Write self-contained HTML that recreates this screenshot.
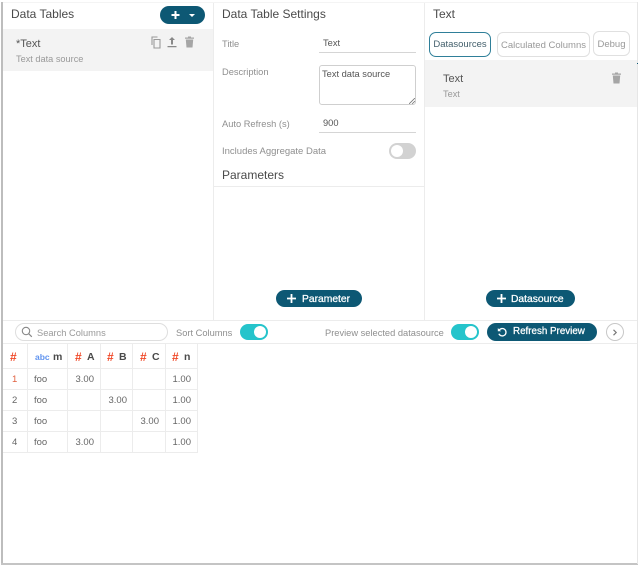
<!DOCTYPE html>
<html>
<head>
<meta charset="utf-8">
<style>
html,body{margin:0;padding:0;background:#fff}
#p{position:relative;width:640px;height:567px;overflow:hidden;background:#fff;font-family:"Liberation Sans",sans-serif;color:#555;filter:blur(.3px)}
#p div,#p svg{position:absolute}
.t{white-space:nowrap;line-height:14px}
.h{font-size:12px;color:#4a4a4a;line-height:16px;white-space:nowrap}
.l{font-size:9.300px;color:#8f8f8f;white-space:nowrap;line-height:12px}
.v{font-size:9.300px;color:#555;white-space:nowrap;line-height:12px}
.ln{background:#ececec}
.u{background:#d5d5d5;height:1px}
.btn{background:#0d5874;border-radius:10px;color:#fff;font-size:10.300px;-webkit-text-stroke:.25px #fff;line-height:17px;height:17px;white-space:nowrap}
.tab{border:1px solid #e0e0e0;border-radius:6px;box-sizing:border-box;font-size:9.500px;color:#999;text-align:center;background:#fff;white-space:nowrap}
.sw{background:#25c4cb;border-radius:8px;width:28px;height:16px}
.sw i{position:absolute;display:block;width:12px;height:12px;border-radius:50%;background:#fff;left:14px;top:2px}
.c{font-size:9.500px;color:#666;white-space:nowrap;line-height:12px}
.r{text-align:right}
.hash{font-size:12px;font-weight:bold;color:#f04a2a;line-height:14px}
.hd{font-size:10.500px;font-weight:bold;color:#4a4a4a;line-height:14px}
</style>
</head>
<body>
<div id="p">
<!-- frame -->
<div style="left:1px;top:2px;width:2px;height:562px;background:#bdbdbd"></div>
<div style="left:1px;top:563px;width:637px;height:2px;background:#c4c4c4"></div>
<div style="left:637px;top:2px;width:1px;height:562px;background:#e6e6e6"></div>
<div style="left:3px;top:2px;width:634px;height:1px;background:#f4f4f4"></div>
<!-- panel lines -->
<div class="ln" style="left:213px;top:3px;width:1px;height:317px"></div>
<div class="ln" style="left:424px;top:3px;width:1px;height:317px"></div>
<div class="ln" style="left:3px;top:320px;width:634px;height:1px"></div>
<div class="ln" style="left:3px;top:343px;width:634px;height:1px"></div>
<div class="ln" style="left:214px;top:186px;width:210px;height:1px"></div>

<!-- Data Tables -->
<div class="h" style="left:11px;top:6px">Data Tables</div>
<div style="left:160px;top:6px;width:45px;height:18px;background:#0d5874;border-radius:9px"></div>
<svg style="left:169px;top:9px" width="28" height="12" viewBox="0 0 28 12"><path d="M6.500 2v8M2.500 6h8" stroke="#fff" stroke-width="2"/><path d="M20 5h6l-3 3z" fill="#fff"/></svg>
<div style="left:3px;top:29px;width:210px;height:42px;background:#f3f3f3"></div>
<div class="t" style="left:16px;top:37px;font-size:11px;color:#555">*Text</div>
<div class="t" style="left:16px;top:52px;font-size:9.200px;color:#999">Text data source</div>
<svg style="left:150px;top:36px" width="12" height="13" viewBox="0 0 12 13"><path d="M7.500 1H2v8M4 3.500h6v8.500H4z" fill="none" stroke="#999" stroke-width="1.100"/></svg>
<svg style="left:166px;top:36px" width="12" height="12" viewBox="0 0 12 12"><path d="M6 1l3 3H7v4.500H5V4H3zM1.500 10h9v1.300h-9z" fill="#888"/></svg>
<svg style="left:184px;top:36px" width="11" height="12" viewBox="0 0 11 12"><path d="M4 0.500h3V1.500h3v1.300H1V1.500h3zM1.800 3.500h7.400L8.500 11.500h-6z" fill="#a5a5a5"/></svg>

<!-- Settings -->
<div class="h" style="left:222px;top:6px">Data Table Settings</div>
<div class="l" style="left:222px;top:38px">Title</div>
<div class="v" style="left:323px;top:37px">Text</div>
<div class="u" style="left:319px;top:52px;width:97px"></div>
<div class="l" style="left:222px;top:66px">Description</div>
<div style="left:319px;top:65px;width:97px;height:40px;box-sizing:border-box;border:1px solid #cfcfcf;border-radius:3px"></div>
<div class="v" style="left:322px;top:68px">Text data source</div>
<svg style="left:409px;top:98px" width="6" height="6" viewBox="0 0 6 6"><path d="M0 6L6 0M3 6L6 3" stroke="#777" stroke-width=".8"/></svg>
<div class="l" style="left:222px;top:118px">Auto Refresh (s)</div>
<div class="v" style="left:323px;top:117px">900</div>
<div class="u" style="left:319px;top:132px;width:97px"></div>
<div class="l" style="left:222px;top:146px;font-size:9.500px">Includes Aggregate Data</div>
<div style="left:389px;top:143px;width:27px;height:16px;border-radius:8px;background:#d2d2d2"><i style="position:absolute;display:block;width:12px;height:12px;border-radius:50%;background:#fff;left:2px;top:2px"></i></div>
<div class="h" style="left:222px;top:167px">Parameters</div>
<div class="btn" style="left:276px;top:290px;width:86px"></div>
<svg style="left:286px;top:293px" width="11" height="11" viewBox="0 0 11 11"><path d="M5.500 1v9M1 5.500h9" stroke="#fff" stroke-width="1.800"/></svg>
<div class="btn" style="left:302px;top:291px;background:none">Parameter</div>

<!-- Text panel -->
<div class="h" style="left:433px;top:6px">Text</div>
<div class="tab" style="left:429px;top:32px;width:62px;height:25px;border:1.500px solid #2f7f99;border-radius:7px;color:#44606c;line-height:23px">Datasources</div>
<div class="tab" style="left:497px;top:32px;width:93px;height:25px;line-height:25px">Calculated Columns</div>
<div class="tab" style="left:593px;top:31px;width:37px;height:25px;line-height:25px">Debug</div>
<div style="left:425px;top:60px;width:212px;height:47px;background:#f3f3f3"></div>
<div class="t" style="left:443px;top:72px;font-size:11px;color:#555">Text</div>
<div class="t" style="left:443px;top:87px;font-size:9.200px;color:#999">Text</div>
<svg style="left:611px;top:72px" width="11" height="12" viewBox="0 0 11 12"><path d="M4 0.500h3V1.500h3v1.300H1V1.500h3zM1.800 3.500h7.400L8.500 11.500h-6z" fill="#a5a5a5"/></svg>
<div style="left:637px;top:63px;width:1px;height:1px;background:#0d5874"></div>
<div class="btn" style="left:486px;top:290px;width:89px"></div>
<svg style="left:496px;top:293px" width="11" height="11" viewBox="0 0 11 11"><path d="M5.500 1v9M1 5.500h9" stroke="#fff" stroke-width="1.800"/></svg>
<div class="btn" style="left:511px;top:291px;background:none">Datasource</div>

<!-- toolbar -->
<div style="left:15px;top:323px;width:153px;height:18px;box-sizing:border-box;border:1px solid #dedede;border-radius:9px"></div>
<svg style="left:21px;top:326px" width="12" height="12" viewBox="0 0 12 12"><circle cx="5" cy="5" r="3.700" fill="none" stroke="#888" stroke-width="1.100"/><path d="M7.800 7.800l3 3" stroke="#888" stroke-width="1.200"/></svg>
<div class="l" style="left:37px;top:327px;color:#999">Search Columns</div>
<div class="l" style="left:176px;top:327px">Sort Columns</div>
<div class="sw" style="left:240px;top:324px"><i></i></div>
<div class="l" style="left:325px;top:327px">Preview selected datasource</div>
<div class="sw" style="left:451px;top:324px"><i></i></div>
<div class="btn" style="left:487px;top:323px;width:110px;height:18px;line-height:18px"></div>
<svg style="left:496px;top:326px" width="12" height="12" viewBox="0 0 12 12"><path d="M3.200 4.200a3.700 3.700 0 1 1-.3 3.500" fill="none" stroke="#fff" stroke-width="1.300"/><path d="M1.800 2v3.300h3.300z" fill="#fff"/></svg>
<div class="btn" style="left:513px;top:323px;height:18px;line-height:18px;background:none;font-size:9.800px">Refresh Preview</div>
<div style="left:606px;top:323px;width:18px;height:18px;box-sizing:border-box;border:1px solid #c8c8c8;border-radius:50%"></div>
<svg style="left:612px;top:329px" width="6" height="7" viewBox="0 0 6 7"><path d="M1.500 .8l2.700 2.700-2.700 2.700" fill="none" stroke="#777" stroke-width="1.200"/></svg>

<!-- table grid -->
<div class="ln" style="left:3px;top:368px;width:195px;height:1px"></div>
<div class="ln" style="left:3px;top:389px;width:195px;height:1px"></div>
<div class="ln" style="left:3px;top:410px;width:195px;height:1px"></div>
<div class="ln" style="left:3px;top:431px;width:195px;height:1px"></div>
<div class="ln" style="left:3px;top:452px;width:195px;height:1px"></div>
<div class="ln" style="left:27px;top:344px;width:1px;height:108px"></div>
<div class="ln" style="left:67px;top:344px;width:1px;height:108px"></div>
<div class="ln" style="left:100px;top:344px;width:1px;height:108px"></div>
<div class="ln" style="left:132px;top:344px;width:1px;height:108px"></div>
<div class="ln" style="left:165px;top:344px;width:1px;height:108px"></div>
<div class="ln" style="left:197px;top:344px;width:1px;height:108px"></div>

<div class="hash" style="left:10px;top:350px">#</div>
<div style="left:35px;top:351px;font-size:8.500px;font-weight:bold;color:#5f93ef;line-height:13px">abc</div>
<div class="hd" style="left:53px;top:350px">m</div>
<div class="hash" style="left:75px;top:350px">#</div><div class="hd" style="left:87px;top:350px">A</div>
<div class="hash" style="left:107px;top:350px">#</div><div class="hd" style="left:119px;top:350px">B</div>
<div class="hash" style="left:140px;top:350px">#</div><div class="hd" style="left:152px;top:350px">C</div>
<div class="hash" style="left:172px;top:350px">#</div><div class="hd" style="left:184px;top:350px">n</div>

<div class="c" style="left:12px;top:374px;color:#e0603f">1</div>
<div class="c" style="left:12px;top:395px">2</div>
<div class="c" style="left:12px;top:416px">3</div>
<div class="c" style="left:12px;top:437px">4</div>
<div class="c" style="left:34px;top:374px">foo</div>
<div class="c" style="left:34px;top:395px">foo</div>
<div class="c" style="left:34px;top:416px">foo</div>
<div class="c" style="left:34px;top:437px">foo</div>
<div class="c r" style="left:64px;top:374px;width:30px">3.00</div>
<div class="c r" style="left:64px;top:437px;width:30px">3.00</div>
<div class="c r" style="left:97px;top:395px;width:30px">3.00</div>
<div class="c r" style="left:129px;top:416px;width:30px">3.00</div>
<div class="c r" style="left:161px;top:374px;width:30px">1.00</div>
<div class="c r" style="left:161px;top:395px;width:30px">1.00</div>
<div class="c r" style="left:161px;top:416px;width:30px">1.00</div>
<div class="c r" style="left:161px;top:437px;width:30px">1.00</div>
</div>
</body>
</html>
